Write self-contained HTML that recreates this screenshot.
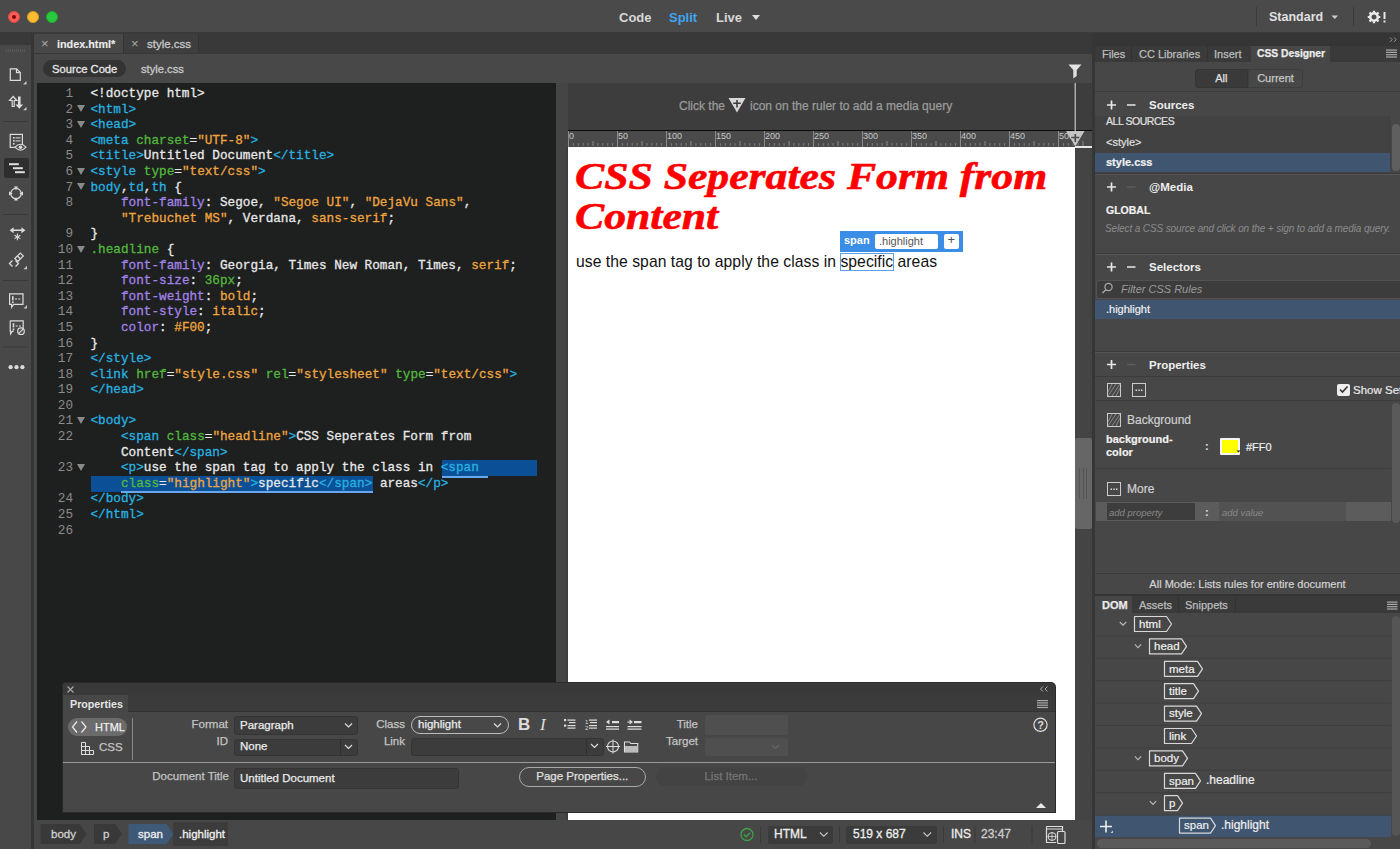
<!DOCTYPE html>
<html><head><meta charset="utf-8">
<style>
*{box-sizing:border-box;margin:0;padding:0}
html,body{width:1400px;height:849px;overflow:hidden;background:#474747;font-family:"Liberation Sans",sans-serif;color:#ddd}
.a{position:absolute}
#titlebar{left:0;top:0;width:1400px;height:33px;background:#4a4a4a;border-bottom:1px solid #3a3a3a}
.tl{width:12px;height:12px;border-radius:50%;top:11px}
.vm{top:11px;font-size:13px;font-weight:bold;color:#d8d8d8;line-height:14px}
#lefttb{left:0;top:33px;width:31px;height:816px;background:#484848}
#lefttop{left:0;top:33px;width:31px;height:12px;background:#393939}
#ldiv{left:31px;top:33px;width:3px;height:816px;background:#363636}
#doctabs{left:34px;top:33px;width:1058px;height:21px;background:#393939}
#subbar{left:34px;top:54px;width:1058px;height:29px;background:#484848}
#codebg{left:37px;top:83px;width:519px;height:737px;background:#1e1f1f}
#codeleft{left:34px;top:83px;width:3px;height:737px;background:#474747}
#splitter{left:556px;top:83px;width:12px;height:737px;background:#454545}
#mqbar{left:568px;top:83px;width:524px;height:47px;background:#3d3d3d}
#ruler{left:568px;top:130px;width:524px;height:17px;background:#4a4a4a;border-top:1px solid #0a0a0a}
#page{left:568px;top:147px;width:507px;height:673px;background:#fff}
#pvright{left:1075px;top:147px;width:17px;height:673px;background:#444}
#rdiv{left:1092px;top:33px;width:3px;height:816px;background:#363636}
#rpanel{left:1095px;top:33px;width:305px;height:816px;background:#474747}
#status{left:34px;top:820px;width:1058px;height:29px;background:#474747}
pre.code{font-family:"Liberation Mono",monospace;font-size:12.7px;line-height:15.6px;color:#e4e4e4;white-space:pre;-webkit-text-stroke:0.3px currentColor}
.t{color:#27b2e0}.g{color:#52b83c}.o{color:#eea540}.p{color:#a283e6}.w{color:#e8e8e8}
.ln{font-family:"Liberation Mono",monospace;font-size:12.7px;line-height:15.6px;color:#8b8b8b;text-align:right;width:40px}
.fold{width:0;height:0;border-left:4px solid transparent;border-right:4px solid transparent;border-top:7px solid #8a8a8a}
.xx{font-size:13px;line-height:13px;color:#aaa}
.tabt{font-size:11.5px;line-height:12px;color:#c8c8c8;white-space:nowrap;-webkit-text-stroke:0.3px currentColor}
.mq{font-size:12px;line-height:13px;color:#9b9b9b;white-space:nowrap;-webkit-text-stroke:0.25px currentColor}
.hl{font-family:"Liberation Serif",serif;font-weight:bold;font-style:italic;font-size:37.8px;line-height:40.2px;color:#f00;white-space:nowrap;transform:scaleX(1.156);transform-origin:0 0;-webkit-text-stroke:0.6px #f00}
.bt{font-size:15.7px;line-height:18px;color:#111;white-space:nowrap;letter-spacing:0.05px}
.pl{font-size:11.5px;line-height:13px;color:#c4c4c4;white-space:nowrap;-webkit-text-stroke:0.25px currentColor}
.pv{font-size:11.5px;line-height:13px;color:#ececec;white-space:nowrap;-webkit-text-stroke:0.25px currentColor}
.box{background:#3c3c3c;border:1px solid #353535;border-radius:3px}
.sb{font-size:11.5px;line-height:13px;color:#d0d0d0;white-space:nowrap;-webkit-text-stroke:0.3px currentColor}
.rt{font-size:11px;line-height:12px;color:#bdbdbd;white-space:nowrap;-webkit-text-stroke:0.25px currentColor}
.hd{font-size:11.5px;line-height:13px;color:#eee;font-weight:bold;white-space:nowrap}
.rl{font-size:11px;line-height:13px;color:#e0e0e0;white-space:nowrap;-webkit-text-stroke:0.2px currentColor}
.dt{font-size:11.5px;line-height:13px;color:#f0f0f0;white-space:nowrap;-webkit-text-stroke:0.2px currentColor}
</style></head><body>
<div id="titlebar" class="a"></div>
<div class="a tl" style="left:8px;background:#fc5d57;border:1px solid #de4a43"></div><div class="a" style="left:12px;top:15px;width:4px;height:4px;border-radius:50%;background:#7e0508"></div>
<div class="a tl" style="left:27px;background:#fdbb2e;border:1px solid #dd9f22"></div>
<div class="a tl" style="left:46px;background:#28c93f;border:1px solid #1dad2c"></div>
<div class="a vm" style="left:619px">Code</div>
<div class="a vm" style="left:669px;color:#3ea6f3">Split</div>
<div class="a vm" style="left:716px">Live</div>
<div class="a" style="left:752px;top:15px;width:0;height:0;border-left:4.5px solid transparent;border-right:4.5px solid transparent;border-top:5px solid #e0e0e0"></div>

<div id="lefttb" class="a"></div>
<div id="lefttop" class="a"></div>
<div id="ldiv" class="a"></div>
<svg class="a" style="left:0;top:0" width="32" height="849" viewBox="0 0 32 849">
<g fill="none" stroke="#dcdcdc" stroke-width="1.2">
<path d="M10.3 68.8h6.2l3.8 3.8v7.7h-10z"/><path d="M16.5 68.8v3.8h3.8"/>
<path d="M12.2 106.5v-6h-2.6l3.6-4 3.6 4h-2.6v6z"/>
<rect x="10.2" y="134.4" width="12.2" height="13" />
<circle cx="16" cy="193.6" r="5.2"/>
<path d="M9.6 293.8h13.4v10.6h-9.2l-2.2 2.8v-2.8h-2z"/>
<path d="M10.2 320.8h13v7.5M13.8 331.2h-1.4l-1.8 2.6v-2.6h-0.4v-10.4"/>
<circle cx="21" cy="331.2" r="3.3"/><path d="M18.8 333.4l4.4-4.4"/>
<path d="M12.5 260.5l-3 3 3 3M15.5 260.5l3 3-3 3" stroke-width="1.3"/>
<path d="M14.8 258.5l5.5-5.5 3 3-5.5 5.5-3-3z M17.5 256l3 3"/>
</g>
<g fill="#dcdcdc">
<path d="M18 96.5v8h-2.6l3.9 4.2 3.9-4.2h-2.6v-8z"/>
<path d="M26.5 81v3.5h-3.5z M26.5 106.8v3.5h-3.5z M27 265.8v3.5h-3.5z M27 305v3.5h-3.5z" fill="#c8c8c8"/>
<rect x="13" y="137" width="1.6" height="1.6"/><rect x="15.5" y="137.4" width="5" height="1"/>
<rect x="13" y="140" width="1.6" height="1.6"/><rect x="15.5" y="140.4" width="5" height="1"/>
<rect x="13" y="143" width="1.6" height="1.6"/>
<path d="M15 147.2q5.5-6 11 0q-5.5 6-11 0z" fill="#484848" stroke="#dcdcdc" stroke-width="1.1"/>
<circle cx="20.5" cy="147.2" r="1.8"/>
<path d="M16 190.2l-2-3.6h4z M16 197l-2 3.6h4z M12.6 193.6l-3.6-2v4z M19.4 193.6l3.6-2v4z"/>
<path d="M9.6 230.3l4-3v2.2h7.8v-2.2l4 3-4 3v-2.2h-7.8v2.2z"/>
<rect x="12" y="296.2" width="1.6" height="4.2"/><rect x="12" y="301.5" width="1.6" height="1.6"/><rect x="15" y="298.5" width="2" height="1"/><rect x="18.2" y="298.5" width="2" height="1"/>
<rect x="12.7" y="323.2" width="1.6" height="4.2"/><rect x="12.7" y="328.5" width="1.6" height="1.6"/><rect x="15.7" y="325.5" width="2" height="1"/><rect x="18.9" y="325.5" width="2" height="1"/>
<circle cx="10.6" cy="367.2" r="2.1"/><circle cx="16.5" cy="367.2" r="2.1"/><circle cx="22.4" cy="367.2" r="2.1"/>
</g>
<g stroke="#dcdcdc" stroke-width="1.1"><path d="M17.4 233.6v6.6M14.5 235.2l5.8 3.4M14.5 238.6l5.8-3.4"/></g>
<g fill="#3a3a3a"><rect x="3" y="121" width="25" height="1"/><rect x="3" y="214" width="25" height="1"/><rect x="3" y="280" width="25" height="1"/><rect x="3" y="346.5" width="25" height="1"/></g>
<rect x="4" y="158" width="25" height="20" rx="2.5" fill="#2e2e2e"/>
<g fill="#e0e0e0"><rect x="9" y="163.2" width="9.8" height="2"/><rect x="13" y="167.2" width="9.8" height="2"/><rect x="15" y="171.2" width="9.8" height="2"/></g>
<g fill="#565656"><rect x="6" y="49" width="1" height="3"/><rect x="8" y="49" width="1" height="3"/><rect x="10" y="49" width="1" height="3"/><rect x="12" y="49" width="1" height="3"/><rect x="14" y="49" width="1" height="3"/><rect x="16" y="49" width="1" height="3"/><rect x="18" y="49" width="1" height="3"/><rect x="20" y="49" width="1" height="3"/><rect x="22" y="49" width="1" height="3"/><rect x="24" y="49" width="1" height="3"/></g>
</svg>

<div id="doctabs" class="a"></div>
<div id="subbar" class="a"></div>
<div class="a" style="left:34px;top:34px;width:89px;height:19px;background:#484848"></div>
<div class="a" style="left:123px;top:34px;width:76px;height:19px;background:#3e3e3e;border-left:1px solid #333;border-right:1px solid #333"></div>
<div class="a xx" style="left:41px;top:37px">&#215;</div>
<div class="a tabt" style="left:57px;top:38px;color:#ececec;font-weight:bold;font-size:10.8px;-webkit-text-stroke:0.1px currentColor">index.html*</div>
<div class="a xx" style="left:131px;top:37px">&#215;</div>
<div class="a tabt" style="left:147px;top:38px">style.css</div>
<div class="a" style="left:43px;top:60px;width:83px;height:17px;border-radius:9px;background:#333"></div>
<div class="a tabt" style="left:52px;top:63px;color:#e8e8e8;font-size:11.2px">Source Code</div>
<div class="a tabt" style="left:141px;top:63px;font-size:11.2px">style.css</div>
<div id="codeleft" class="a"></div>
<div id="codebg" class="a"></div>
<div class="a" style="left:442px;top:460px;width:94.5px;height:16px;background:#0b5096"></div>
<div class="a" style="left:91px;top:476px;width:282px;height:15.5px;background:#0b5096"></div>
<div class="a" style="left:442px;top:476px;width:46px;height:2px;background:#6aa8ee"></div>
<div class="a" style="left:121px;top:491px;width:252px;height:2px;background:#6aa8ee"></div>
<pre class="a code" style="left:90.5px;top:86px"><span class="w">&lt;!doctype html&gt;</span>
<span class="t">&lt;html&gt;</span>
<span class="t">&lt;head&gt;</span>
<span class="t">&lt;meta</span><span class="w"> </span><span class="g">charset</span><span class="w">=</span><span class="o">&quot;UTF-8&quot;</span><span class="t">&gt;</span>
<span class="t">&lt;title&gt;</span><span class="w">Untitled Document</span><span class="t">&lt;/title&gt;</span>
<span class="t">&lt;style</span><span class="w"> </span><span class="g">type</span><span class="w">=</span><span class="o">&quot;text/css&quot;</span><span class="t">&gt;</span>
<span class="t">body</span><span class="w">,</span><span class="t">td</span><span class="w">,</span><span class="t">th</span><span class="w"> {</span>
<span class="w">    </span><span class="p">font-family</span><span class="w">: Segoe, </span><span class="o">&quot;Segoe UI&quot;</span><span class="w">, </span><span class="o">&quot;DejaVu Sans&quot;</span><span class="w">,</span>
<span class="w">    </span><span class="o">&quot;Trebuchet MS&quot;</span><span class="w">, Verdana, </span><span class="o">sans-serif</span><span class="w">;</span>
<span class="w">}</span>
<span class="g">.headline</span><span class="w"> {</span>
<span class="w">    </span><span class="p">font-family</span><span class="w">: Georgia, Times New Roman, Times, </span><span class="o">serif</span><span class="w">;</span>
<span class="w">    </span><span class="p">font-size</span><span class="w">: </span><span class="g">36px</span><span class="w">;</span>
<span class="w">    </span><span class="p">font-weight</span><span class="w">: </span><span class="o">bold</span><span class="w">;</span>
<span class="w">    </span><span class="p">font-style</span><span class="w">: </span><span class="o">italic</span><span class="w">;</span>
<span class="w">    </span><span class="p">color</span><span class="w">: </span><span class="o">#F00</span><span class="w">;</span>
<span class="w">}</span>
<span class="t">&lt;/style&gt;</span>
<span class="t">&lt;link</span><span class="w"> </span><span class="g">href</span><span class="w">=</span><span class="o">&quot;style.css&quot;</span><span class="w"> </span><span class="g">rel</span><span class="w">=</span><span class="o">&quot;stylesheet&quot;</span><span class="w"> </span><span class="g">type</span><span class="w">=</span><span class="o">&quot;text/css&quot;</span><span class="t">&gt;</span>
<span class="t">&lt;/head&gt;</span>

<span class="t">&lt;body&gt;</span>
<span class="w">    </span><span class="t">&lt;span</span><span class="w"> </span><span class="g">class</span><span class="w">=</span><span class="o">&quot;headline&quot;</span><span class="t">&gt;</span><span class="w">CSS Seperates Form from</span>
<span class="w">    Content</span><span class="t">&lt;/span&gt;</span>
<span class="w">    </span><span class="t">&lt;p&gt;</span><span class="w">use the span tag to apply the class in </span><span class="t">&lt;span</span>
<span class="w">    </span><span class="g">class</span><span class="w">=</span><span class="o">&quot;highlight&quot;</span><span class="t">&gt;</span><span class="w">specific</span><span class="t">&lt;/span&gt;</span><span class="w"> areas</span><span class="t">&lt;/p&gt;</span>
<span class="t">&lt;/body&gt;</span>
<span class="t">&lt;/html&gt;</span>
</pre>
<pre class="a ln" style="left:33px;top:86px">1
2
3
4
5
6
7
8

9
10
11
12
13
14
15
16
17
18
19
20
21
22

23

24
25
26</pre>
<div class="a fold" style="left:77px;top:105.1px"></div>
<div class="a fold" style="left:77px;top:120.7px"></div>
<div class="a fold" style="left:77px;top:167.5px"></div>
<div class="a fold" style="left:77px;top:183.1px"></div>
<div class="a fold" style="left:77px;top:245.5px"></div>
<div class="a fold" style="left:77px;top:417.1px"></div>
<div class="a fold" style="left:77px;top:463.9px"></div>
<div id="splitter" class="a"></div><div class="a" style="left:566px;top:147px;width:2px;height:673px;background:#3e3e3e"></div>
<!--PROPS-->
<div id="mqbar" class="a"></div>
<div id="ruler" class="a"></div>
<div id="page" class="a"></div>
<div id="pvright" class="a"></div>
<div id="rdiv" class="a"></div>
<div id="rpanel" class="a"></div>
<div id="status" class="a"></div>
<div class="a mq" style="left:679px;top:100px">Click the</div>
<div class="a mq" style="left:750px;top:100px">icon on the ruler to add a media query</div>
<div class="a hl" style="left:575px;top:156px">CSS Seperates Form from<br>Content</div>
<div class="a bt" style="left:576px;top:253px">use the span tag to apply the class in specific areas</div>
<div class="a" style="left:840px;top:230.5px;width:123px;height:21.5px;background:#3a8ee6"></div>
<div class="a" style="left:844px;top:234px;font-size:11px;font-weight:bold;color:#fff;line-height:12px">span</div>
<div class="a" style="left:874.5px;top:233.5px;width:63.5px;height:15.5px;background:#fff;border-radius:2px"></div>
<div class="a" style="left:879px;top:235px;font-size:11px;color:#555;line-height:12px">.highlight</div>
<div class="a" style="left:944px;top:233.5px;width:15px;height:15.5px;background:#fff;border-radius:2px"></div>
<div class="a" style="left:947.5px;top:233px;font-size:13px;color:#555;line-height:14px">+</div>
<div class="a" style="left:840px;top:252.5px;width:53.5px;height:18px;border:1px solid #5aa0ea"></div>
<div class="a" style="left:1075px;top:438px;width:17px;height:91px;background:#666;border-radius:2px"></div>
<div class="a" style="left:1079px;top:468px;width:1px;height:31px;background:#555"></div>
<div class="a" style="left:1082.5px;top:468px;width:1px;height:31px;background:#555"></div>
<div class="a" style="left:1086px;top:468px;width:1px;height:31px;background:#555"></div>
<svg class="a" style="left:0;top:0;pointer-events:none" width="1400" height="849" viewBox="0 0 1400 849"><rect x="568.00" y="131" width="1" height="16" fill="#8a8a8a"/><rect x="572.90" y="143" width="1" height="3" fill="#7a7a7a"/><rect x="577.80" y="143" width="1" height="3" fill="#7a7a7a"/><rect x="582.70" y="143" width="1" height="3" fill="#7a7a7a"/><rect x="587.60" y="143" width="1" height="3" fill="#7a7a7a"/><rect x="592.50" y="141" width="1" height="5" fill="#8a8a8a"/><rect x="597.40" y="143" width="1" height="3" fill="#7a7a7a"/><rect x="602.30" y="143" width="1" height="3" fill="#7a7a7a"/><rect x="607.20" y="143" width="1" height="3" fill="#7a7a7a"/><rect x="612.10" y="143" width="1" height="3" fill="#7a7a7a"/><rect x="617.00" y="131" width="1" height="16" fill="#8a8a8a"/><rect x="621.90" y="143" width="1" height="3" fill="#7a7a7a"/><rect x="626.80" y="143" width="1" height="3" fill="#7a7a7a"/><rect x="631.70" y="143" width="1" height="3" fill="#7a7a7a"/><rect x="636.60" y="143" width="1" height="3" fill="#7a7a7a"/><rect x="641.50" y="141" width="1" height="5" fill="#8a8a8a"/><rect x="646.40" y="143" width="1" height="3" fill="#7a7a7a"/><rect x="651.30" y="143" width="1" height="3" fill="#7a7a7a"/><rect x="656.20" y="143" width="1" height="3" fill="#7a7a7a"/><rect x="661.10" y="143" width="1" height="3" fill="#7a7a7a"/><rect x="666.00" y="131" width="1" height="16" fill="#8a8a8a"/><rect x="670.90" y="143" width="1" height="3" fill="#7a7a7a"/><rect x="675.80" y="143" width="1" height="3" fill="#7a7a7a"/><rect x="680.70" y="143" width="1" height="3" fill="#7a7a7a"/><rect x="685.60" y="143" width="1" height="3" fill="#7a7a7a"/><rect x="690.50" y="141" width="1" height="5" fill="#8a8a8a"/><rect x="695.40" y="143" width="1" height="3" fill="#7a7a7a"/><rect x="700.30" y="143" width="1" height="3" fill="#7a7a7a"/><rect x="705.20" y="143" width="1" height="3" fill="#7a7a7a"/><rect x="710.10" y="143" width="1" height="3" fill="#7a7a7a"/><rect x="715.00" y="131" width="1" height="16" fill="#8a8a8a"/><rect x="719.90" y="143" width="1" height="3" fill="#7a7a7a"/><rect x="724.80" y="143" width="1" height="3" fill="#7a7a7a"/><rect x="729.70" y="143" width="1" height="3" fill="#7a7a7a"/><rect x="734.60" y="143" width="1" height="3" fill="#7a7a7a"/><rect x="739.50" y="141" width="1" height="5" fill="#8a8a8a"/><rect x="744.40" y="143" width="1" height="3" fill="#7a7a7a"/><rect x="749.30" y="143" width="1" height="3" fill="#7a7a7a"/><rect x="754.20" y="143" width="1" height="3" fill="#7a7a7a"/><rect x="759.10" y="143" width="1" height="3" fill="#7a7a7a"/><rect x="764.00" y="131" width="1" height="16" fill="#8a8a8a"/><rect x="768.90" y="143" width="1" height="3" fill="#7a7a7a"/><rect x="773.80" y="143" width="1" height="3" fill="#7a7a7a"/><rect x="778.70" y="143" width="1" height="3" fill="#7a7a7a"/><rect x="783.60" y="143" width="1" height="3" fill="#7a7a7a"/><rect x="788.50" y="141" width="1" height="5" fill="#8a8a8a"/><rect x="793.40" y="143" width="1" height="3" fill="#7a7a7a"/><rect x="798.30" y="143" width="1" height="3" fill="#7a7a7a"/><rect x="803.20" y="143" width="1" height="3" fill="#7a7a7a"/><rect x="808.10" y="143" width="1" height="3" fill="#7a7a7a"/><rect x="813.00" y="131" width="1" height="16" fill="#8a8a8a"/><rect x="817.90" y="143" width="1" height="3" fill="#7a7a7a"/><rect x="822.80" y="143" width="1" height="3" fill="#7a7a7a"/><rect x="827.70" y="143" width="1" height="3" fill="#7a7a7a"/><rect x="832.60" y="143" width="1" height="3" fill="#7a7a7a"/><rect x="837.50" y="141" width="1" height="5" fill="#8a8a8a"/><rect x="842.40" y="143" width="1" height="3" fill="#7a7a7a"/><rect x="847.30" y="143" width="1" height="3" fill="#7a7a7a"/><rect x="852.20" y="143" width="1" height="3" fill="#7a7a7a"/><rect x="857.10" y="143" width="1" height="3" fill="#7a7a7a"/><rect x="862.00" y="131" width="1" height="16" fill="#8a8a8a"/><rect x="866.90" y="143" width="1" height="3" fill="#7a7a7a"/><rect x="871.80" y="143" width="1" height="3" fill="#7a7a7a"/><rect x="876.70" y="143" width="1" height="3" fill="#7a7a7a"/><rect x="881.60" y="143" width="1" height="3" fill="#7a7a7a"/><rect x="886.50" y="141" width="1" height="5" fill="#8a8a8a"/><rect x="891.40" y="143" width="1" height="3" fill="#7a7a7a"/><rect x="896.30" y="143" width="1" height="3" fill="#7a7a7a"/><rect x="901.20" y="143" width="1" height="3" fill="#7a7a7a"/><rect x="906.10" y="143" width="1" height="3" fill="#7a7a7a"/><rect x="911.00" y="131" width="1" height="16" fill="#8a8a8a"/><rect x="915.90" y="143" width="1" height="3" fill="#7a7a7a"/><rect x="920.80" y="143" width="1" height="3" fill="#7a7a7a"/><rect x="925.70" y="143" width="1" height="3" fill="#7a7a7a"/><rect x="930.60" y="143" width="1" height="3" fill="#7a7a7a"/><rect x="935.50" y="141" width="1" height="5" fill="#8a8a8a"/><rect x="940.40" y="143" width="1" height="3" fill="#7a7a7a"/><rect x="945.30" y="143" width="1" height="3" fill="#7a7a7a"/><rect x="950.20" y="143" width="1" height="3" fill="#7a7a7a"/><rect x="955.10" y="143" width="1" height="3" fill="#7a7a7a"/><rect x="960.00" y="131" width="1" height="16" fill="#8a8a8a"/><rect x="964.90" y="143" width="1" height="3" fill="#7a7a7a"/><rect x="969.80" y="143" width="1" height="3" fill="#7a7a7a"/><rect x="974.70" y="143" width="1" height="3" fill="#7a7a7a"/><rect x="979.60" y="143" width="1" height="3" fill="#7a7a7a"/><rect x="984.50" y="141" width="1" height="5" fill="#8a8a8a"/><rect x="989.40" y="143" width="1" height="3" fill="#7a7a7a"/><rect x="994.30" y="143" width="1" height="3" fill="#7a7a7a"/><rect x="999.20" y="143" width="1" height="3" fill="#7a7a7a"/><rect x="1004.10" y="143" width="1" height="3" fill="#7a7a7a"/><rect x="1009.00" y="131" width="1" height="16" fill="#8a8a8a"/><rect x="1013.90" y="143" width="1" height="3" fill="#7a7a7a"/><rect x="1018.80" y="143" width="1" height="3" fill="#7a7a7a"/><rect x="1023.70" y="143" width="1" height="3" fill="#7a7a7a"/><rect x="1028.60" y="143" width="1" height="3" fill="#7a7a7a"/><rect x="1033.50" y="141" width="1" height="5" fill="#8a8a8a"/><rect x="1038.40" y="143" width="1" height="3" fill="#7a7a7a"/><rect x="1043.30" y="143" width="1" height="3" fill="#7a7a7a"/><rect x="1048.20" y="143" width="1" height="3" fill="#7a7a7a"/><rect x="1053.10" y="143" width="1" height="3" fill="#7a7a7a"/><rect x="1058.00" y="131" width="1" height="16" fill="#8a8a8a"/><rect x="1062.90" y="143" width="1" height="3" fill="#7a7a7a"/><rect x="1067.80" y="143" width="1" height="3" fill="#7a7a7a"/><rect x="1072.70" y="143" width="1" height="3" fill="#7a7a7a"/><rect x="1077.60" y="143" width="1" height="3" fill="#7a7a7a"/><rect x="1082.50" y="141" width="1" height="5" fill="#8a8a8a"/><g font-family="Liberation Sans" font-size="9" fill="#c8c8c8"><text x="569.00" y="138.6">0</text><text x="618.00" y="138.6">50</text><text x="667.00" y="138.6">100</text><text x="716.00" y="138.6">150</text><text x="765.00" y="138.6">200</text><text x="814.00" y="138.6">250</text><text x="863.00" y="138.6">300</text><text x="912.00" y="138.6">350</text><text x="961.00" y="138.6">400</text><text x="1010.00" y="138.6">450</text><text x="1059.00" y="138.6">500</text></g><rect x="1075" y="146" width="17" height="2" fill="#e8e8e8"/><rect x="1074.6" y="83" width="1.2" height="62" fill="#c8c8c8"/><path d="M1066 131h18.6l-9.3 15.5z" fill="#c4c4c4"/><path d="M1075.3 134v8M1071.3 137.5h8" stroke="#4a4a4a" stroke-width="1.6"/><path d="M1068.5 64.5h13l-4.8 5.6v5.8l-3.4 2.5v-8.3z" fill="#e2e2e2"/><path d="M728.5 98h17l-8.5 14.5z" fill="#d8d8d8"/><path d="M737 100v7.5M733.2 103.3h7.6" stroke="#3d3d3d" stroke-width="1.6"/></svg>
<div class="a" style="left:63px;top:683px;width:992px;height:129px;background:#474747;border-radius:3px 4px 0 0;box-shadow:0 0 0 1px #2a2a2a"></div>
<div class="a" style="left:63px;top:683px;width:992px;height:12px;background:#393939;border-radius:3px 4px 0 0"></div>
<div class="a" style="left:63px;top:695px;width:992px;height:17px;background:#3b3b3b;border-bottom:1px solid #333"></div>
<div class="a" style="left:63px;top:695px;width:65px;height:17px;background:#474747"></div>
<svg class="a" style="left:66px;top:685px" width="9" height="9"><path d="M1.5 1.5l6 6M7.5 1.5l-6 6" stroke="#aaa" stroke-width="1.1"/></svg>
<div class="a" style="left:70px;top:698px;font-size:10.7px;line-height:12px;font-weight:bold;color:#e4e4e4">Properties</div>
<svg class="a" style="left:1040px;top:686px" width="10" height="6"><path d="M3 0.5l-2.5 2.5 2.5 2.5M7.5 0.5l-2.5 2.5 2.5 2.5" fill="none" stroke="#aaa" stroke-width="1"/></svg>
<div class="a" style="left:68px;top:718px;width:58.5px;height:18px;border-radius:9px;background:#6b6b6b"></div>

<div class="a" style="left:132px;top:718px;width:1px;height:42px;background:#888"></div>
<div class="a pl" style="left:95px;top:721px;color:#f0f0f0;font-size:11px">HTML</div>
<div class="a pl" style="left:99px;top:741px">CSS</div>
<div class="a pl" style="left:170px;top:718px;width:58px;text-align:right">Format</div>
<div class="a pl" style="left:170px;top:735px;width:58px;text-align:right">ID</div>
<div class="a pl" style="left:330px;top:718px;width:75px;text-align:right">Class</div>
<div class="a pl" style="left:330px;top:735px;width:75px;text-align:right">Link</div>
<div class="a pl" style="left:620px;top:718px;width:78px;text-align:right">Title</div>
<div class="a pl" style="left:620px;top:735px;width:78px;text-align:right">Target</div>
<div class="a pl" style="left:100px;top:770px;width:129px;text-align:right">Document Title</div>
<div class="a box" style="left:234px;top:716px;width:124px;height:19px"></div>
<div class="a box" style="left:234px;top:738.5px;width:124px;height:17px"></div>
<div class="a" style="left:340px;top:739px;width:1px;height:16px;background:#2f2f2f"></div>
<div class="a pv" style="left:240px;top:719px">Paragraph</div>
<div class="a pv" style="left:240px;top:740px">None</div>
<div class="a" style="left:411px;top:715.5px;width:98px;height:18.5px;border:1.3px solid #bbb;border-radius:10px;background:#484848"></div>
<div class="a pv" style="left:418px;top:718px">highlight</div>
<div class="a" style="left:518px;top:716px;font-size:17px;line-height:18px;font-weight:bold;color:#ddd">B</div>
<div class="a" style="left:540px;top:716px;font-size:17px;line-height:18px;font-style:italic;font-family:'Liberation Serif',serif;color:#ddd">I</div>
<div class="a box" style="left:411px;top:738px;width:193px;height:17.5px"></div>
<div class="a" style="left:586px;top:739px;width:1px;height:16px;background:#2f2f2f"></div>
<div class="a" style="left:704.5px;top:715px;width:83.5px;height:20px;background:#4f4f4f;border-radius:2px"></div>
<div class="a" style="left:704.5px;top:738px;width:83.5px;height:17.5px;background:#4f4f4f;border-radius:2px"></div>
<div class="a" style="left:63px;top:762px;width:992px;height:1px;background:#9a9a9a"></div>
<div class="a box" style="left:234px;top:767.5px;width:224.5px;height:21px"></div>
<div class="a pv" style="left:240px;top:771.5px">Untitled Document</div>
<div class="a" style="left:518.5px;top:767px;width:127.5px;height:19.5px;border:1.3px solid #aaa;border-radius:10px"></div>
<div class="a pv" style="left:518.5px;top:770px;width:127.5px;text-align:center;color:#e0e0e0">Page Properties...</div>
<div class="a" style="left:655.5px;top:766.5px;width:151px;height:19.5px;background:#434343;border-radius:10px"></div>
<div class="a pv" style="left:655.5px;top:770px;width:151px;text-align:center;color:#767676">List Item...</div>
<svg class="a" style="left:0;top:0" width="1100" height="849" viewBox="0 0 1100 849">
<path d="M77 721.5l-4.5 5.5 4.5 5.5M81.5 721.5l4.5 5.5-4.5 5.5" fill="none" stroke="#eee" stroke-width="1.2"/>
<path d="M81.5 742.5h4v12h-4zM81.5 746.5h8v8h-8zM81.5 750.5h12v4h-12zM85.5 750.5v4M89.5 750.5v4" fill="none" stroke="#ddd" stroke-width="1"/>
<path d="M1036 808h10l-5-5z" fill="#e8e8e8"/>
<circle cx="1040.5" cy="724.8" r="6.6" fill="none" stroke="#ddd" stroke-width="1.2"/>
<g fill="#aaa"><rect x="1037" y="700" width="11" height="1.2"/><rect x="1037" y="702.3" width="11" height="1.2"/><rect x="1037" y="704.6" width="11" height="1.2"/><rect x="1037" y="706.9" width="11" height="1.2"/></g>
<g fill="#ddd">
<rect x="564" y="719" width="2.2" height="2.2"/><rect x="567.5" y="719.5" width="8" height="1.2"/><rect x="569" y="722" width="6.5" height="1.2"/><rect x="564" y="724.5" width="2.2" height="2.2"/><rect x="567.5" y="725" width="8" height="1.2"/><rect x="567.5" y="727.5" width="8" height="1.2"/>
<rect x="589" y="719.5" width="8" height="1.2"/><rect x="590" y="722" width="7" height="1.2"/><rect x="589" y="725" width="8" height="1.2"/><rect x="589" y="727.5" width="8" height="1.2"/>
<rect x="606" y="726" width="13" height="1.2"/><rect x="606" y="728.5" width="13" height="1.2"/><rect x="612" y="721" width="7" height="2.2"/><path d="M606 722l3.5-2.5v5z"/>
<rect x="627.5" y="726" width="14" height="1.2"/><rect x="627.5" y="728.5" width="14" height="1.2"/><rect x="634" y="721" width="7.5" height="2.2"/><path d="M633 722l-3.5-2.5v5z"/><rect x="627.5" y="721.5" width="2" height="1.2"/>
</g>
<text x="585" y="724" font-family="Liberation Sans" font-size="6" fill="#ddd">1</text><text x="585" y="730" font-family="Liberation Sans" font-size="6" fill="#ddd">2</text>
<circle cx="613" cy="746.5" r="5.5" fill="none" stroke="#ddd" stroke-width="1.1"/><path d="M613 739.5v14M606 746.5h14" stroke="#ddd" stroke-width="1"/>
<path d="M624.5 742h5l1.2 1.5h7v8.5h-13.2z" fill="none" stroke="#ddd" stroke-width="1.1"/><rect x="625" y="746" width="12.5" height="6" fill="#bbb"/>
<path d="M345 723.5l3.5 3.5 3.5-3.5M494 723.5l3.5 3.5 3.5-3.5M345 745l3.5 3.5 3.5-3.5M591 744l3.5 3.5 3.5-3.5" fill="none" stroke="#ddd" stroke-width="1.2"/><path d="M772 745l3.5 3.5 3.5-3.5" fill="none" stroke="#666" stroke-width="1.2"/><text x="1040.5" y="729" text-anchor="middle" font-family="Liberation Sans" font-size="11" font-weight="bold" fill="#ddd">?</text>
</svg>
<div class="a" style="left:173px;top:822px;width:55px;height:24px;background:#3c3c3c"></div>
<svg class="a" style="left:0;top:0" width="1100" height="849" viewBox="0 0 1100 849">
<path d="M40.7 824h39l7 10-7 10h-39z" fill="#393939"/>
<path d="M94 824h21l7 10-7 10h-21z" fill="#393939"/>
<path d="M128.5 824h38l7 10-7 10h-38z" fill="#3f5a78"/>
<circle cx="747" cy="834.5" r="6" fill="none" stroke="#3ea14a" stroke-width="1.3"/><path d="M743.8 834.5l2.3 2.3 4-4" fill="none" stroke="#3ea14a" stroke-width="1.3"/>
<path d="M1046.5 826.5h16v4.5M1046.5 826.5v16h9.5" fill="none" stroke="#ddd" stroke-width="1.2"/><rect x="1046.5" y="828.5" width="16" height="1" fill="#ddd"/>
<circle cx="1052" cy="836.5" r="4" fill="none" stroke="#ddd" stroke-width="1"/><path d="M1048 836.5h8M1052 832.5v8" stroke="#ddd" stroke-width="0.8"/>
<rect x="1057.5" y="831.5" width="7.5" height="12" rx="1" fill="#474747" stroke="#ddd" stroke-width="1.2"/>

<g fill="#3a3a3a"><rect x="760" y="826" width="1" height="17"/><rect x="839" y="826" width="1" height="17"/><rect x="943" y="826" width="1" height="17"/><rect x="974.5" y="826" width="1" height="17"/><rect x="1031.5" y="826" width="1" height="17"/></g>
</svg>
<div class="a sb" style="left:51px;top:828px">body</div>
<div class="a sb" style="left:103px;top:828px">p</div>
<div class="a sb" style="left:138px;top:828px;color:#f0f0f0">span</div>
<div class="a sb" style="left:179px;top:828px;color:#f0f0f0">.highlight</div>
<div class="a" style="left:767.5px;top:825.5px;width:65px;height:18px;background:#3b3b3b;border-radius:2px"></div>
<div class="a" style="left:846px;top:825.5px;width:90.5px;height:18px;background:#3b3b3b;border-radius:2px"></div>
<div class="a sb" style="left:774px;top:828px;color:#eee;font-size:12px">HTML</div>
<div class="a sb" style="left:853px;top:828px;color:#eee;font-size:12px">519 x 687</div>
<div class="a sb" style="left:951px;top:828px;color:#eee;font-size:12px">INS</div>
<div class="a sb" style="left:981px;top:828px;color:#ccc;font-size:12px">23:47</div>
<svg class="a" style="left:0;top:0" width="1100" height="849" viewBox="0 0 1100 849"><path d="M820 832.5l3.8 3.8 3.8-3.8M923.5 832.5l3.8 3.8 3.8-3.8" fill="none" stroke="#ccc" stroke-width="1.1"/></svg>
<div class="a" style="left:1095px;top:33px;width:305px;height:13px;background:#353535"></div>
<svg class="a" style="left:1389px;top:37px" width="10" height="6"><path d="M1 0.5l2.2 2.2-2.2 2.2M5 0.5l2.2 2.2-2.2 2.2" fill="none" stroke="#999" stroke-width="1"/></svg>
<div class="a" style="left:1095px;top:46px;width:305px;height:16px;background:#3a3a3a"></div>
<div class="a" style="left:1131px;top:46px;width:1px;height:16px;background:#333"></div>
<div class="a" style="left:1206.5px;top:46px;width:1px;height:16px;background:#333"></div>
<div class="a" style="left:1251px;top:46px;width:79px;height:16px;background:#474747"></div>
<div class="a rt" style="left:1102px;top:48px">Files</div>
<div class="a rt" style="left:1139px;top:48px">CC Libraries</div>
<div class="a rt" style="left:1214px;top:48px">Insert</div>
<div class="a rt" style="left:1257px;top:48px;color:#ececec;font-weight:bold;font-size:10.3px">CSS Designer</div>
<g></g>
<div class="a" style="left:1194.5px;top:69px;width:53.5px;height:19px;background:#3a3a3a;border:1px solid #353535;border-radius:3px 0 0 3px"></div>
<div class="a" style="left:1248px;top:69px;width:55px;height:19px;background:#474747;border:1px solid #3e3e3e;border-radius:0 3px 3px 0"></div>
<div class="a rt" style="left:1194.5px;top:72px;width:53.5px;text-align:center;color:#e0e0e0">All</div>
<div class="a rt" style="left:1248px;top:72px;width:55px;text-align:center;color:#c8c8c8">Current</div>
<div class="a" style="left:1095px;top:91px;width:305px;height:1px;background:#3c3c3c"></div>
<div class="a" style="left:1095px;top:116px;width:296px;height:57px;background:#424242"></div>
<div class="a" style="left:1095px;top:152.5px;width:295px;height:19.5px;background:#3f5570"></div>
<div class="a" style="left:1391.5px;top:124px;width:8.5px;height:47px;background:#5f5f5f;border-radius:4px"></div>
<div class="a" style="left:1095px;top:173px;width:305px;height:2px;background:#555;border-top:1px solid #3c3c3c"></div>
<div class="a" style="left:1095px;top:252.5px;width:305px;height:2px;background:#555;border-top:1px solid #3c3c3c"></div>
<div class="a" style="left:1095px;top:350.5px;width:305px;height:2px;background:#555;border-top:1px solid #3c3c3c"></div>
<div class="a hd" style="left:1149px;top:99px">Sources</div>
<div class="a rl" style="left:1106px;top:115px;font-size:10.5px;letter-spacing:-0.45px">ALL SOURCES</div>
<div class="a rl" style="left:1106px;top:135.5px">&lt;style&gt;</div>
<div class="a rl" style="left:1106px;top:156px;font-weight:bold;color:#f0f0f0">style.css</div>
<div class="a hd" style="left:1149px;top:181px">@Media</div>
<div class="a rl" style="left:1106px;top:203.5px;font-weight:bold;color:#f0f0f0;font-size:10.5px">GLOBAL</div>
<div class="a" style="left:1105px;top:223px;font-size:10px;line-height:12px;font-style:italic;color:#8c8c8c;white-space:nowrap;letter-spacing:-0.12px">Select a CSS source and click on the + sign to add a media query.</div>
<div class="a hd" style="left:1149px;top:261px">Selectors</div>
<div class="a" style="left:1096px;top:280px;width:304px;height:18.5px;background:#3c3c3c;border:1px solid #525252;border-right:none;border-radius:3px 0 0 3px"></div>
<div class="a" style="left:1121px;top:283px;font-size:11px;line-height:13px;font-style:italic;color:#9a9a9a;white-space:nowrap">Filter CSS Rules</div>
<div class="a" style="left:1095px;top:299.5px;width:305px;height:19.5px;background:#3f5570"></div>
<div class="a rl" style="left:1106px;top:303px;color:#f0f0f0">.highlight</div>
<div class="a hd" style="left:1149px;top:358.5px">Properties</div>
<div class="a" style="left:1095px;top:376px;width:305px;height:1px;background:#3c3c3c"></div>
<div class="a" style="left:1095px;top:400px;width:305px;height:1px;background:#3e3e3e"></div>
<div class="a" style="left:1337px;top:383.5px;width:12.5px;height:12.5px;background:#eee;border-radius:2px"></div>
<div class="a rl" style="left:1353px;top:383.5px;font-size:11.5px;color:#e8e8e8">Show Set</div>
<div class="a" style="left:1391.5px;top:403px;width:8.5px;height:120px;background:#5a5a5a;border-radius:4px"></div>
<div class="a rl" style="left:1127px;top:413.5px;font-size:12px;color:#d0d0d0">Background</div>
<div class="a rl" style="left:1106px;top:433px;font-weight:bold;color:#f0f0f0;line-height:12.7px">background-<br>color</div>
<div class="a rl" style="left:1205px;top:440px;font-weight:bold;color:#ddd">:</div>
<div class="a" style="left:1219.5px;top:438px;width:20.5px;height:16.5px;background:#ff0;border:2px solid #f4f4f4;border-radius:1px"></div>
<div class="a rl" style="left:1246px;top:441px;color:#f0f0f0">#FF0</div>
<div class="a" style="left:1095px;top:468px;width:296px;height:1px;background:#3e3e3e"></div>
<div class="a rl" style="left:1127px;top:483px;font-size:12px;color:#d0d0d0">More</div>
<div class="a" style="left:1096px;top:501.5px;width:295px;height:19.5px;background:#5c5c5c"></div>
<div class="a" style="left:1107px;top:503px;width:88px;height:16.5px;background:#3d3d3d"></div>
<div class="a" style="left:1219px;top:502px;width:127px;height:18.5px;background:#525252"></div>
<div class="a rl" style="left:1205px;top:506px;font-weight:bold;color:#ddd">:</div>
<div class="a" style="left:1109px;top:507px;font-size:9.5px;line-height:12px;font-style:italic;color:#8a8a8a">add property</div>
<div class="a" style="left:1222px;top:507px;font-size:9.5px;line-height:12px;font-style:italic;color:#8a8a8a">add value</div>
<div class="a" style="left:1095px;top:573px;width:305px;height:1px;background:#3a3a3a"></div>
<div class="a" style="left:1095px;top:574px;width:305px;height:20px;background:#474747"></div>
<div class="a rl" style="left:1095px;top:577.5px;width:305px;text-align:center;font-size:11px;color:#d4d4d4">All Mode: Lists rules for entire document</div>
<div class="a" style="left:1095px;top:594px;width:305px;height:2px;background:#343434"></div>
<div class="a" style="left:1095px;top:596px;width:305px;height:17px;background:#3a3a3a"></div>
<div class="a" style="left:1095px;top:596px;width:37px;height:17px;background:#474747"></div>
<div class="a" style="left:1178px;top:596px;width:1px;height:17px;background:#333"></div>
<div class="a" style="left:1235px;top:596px;width:1px;height:17px;background:#333"></div>
<div class="a rt" style="left:1102px;top:598.5px;color:#ececec;font-weight:bold">DOM</div>
<div class="a rt" style="left:1139px;top:598.5px">Assets</div>
<div class="a rt" style="left:1185px;top:598.5px">Snippets</div>
<svg class="a" style="left:0;top:0" width="1400" height="849" viewBox="0 0 1400 849">
<g stroke="#e8e8e8" stroke-width="1.7"><path d="M1111.5 100.5v9M1107 105h9M1111.5 182.5v9M1107 187h9M1111.5 262.5v9M1107 267h9M1111.5 360v9M1107 364.5h9"/><path d="M1127 105h8.5M1127 267h8.5"/></g>
<g stroke="#5e5e5e" stroke-width="1.7"><path d="M1127 187h8.5M1127 364.5h8.5"/></g>
<circle cx="1108.5" cy="287" r="3.6" fill="none" stroke="#aaa" stroke-width="1.2"/><path d="M1106 289.5l-3.5 3.5" stroke="#aaa" stroke-width="1.5"/>
<rect x="1107.5" y="383.5" width="13" height="13" fill="none" stroke="#ccc" stroke-width="1"/><path d="M1108 392l4-8M1108 396l8-12M1112 396l8-12M1116 396l4-8" stroke="#888" stroke-width="1"/>
<rect x="1132.5" y="383.5" width="13" height="13" fill="none" stroke="#ccc" stroke-width="1"/><g fill="#ddd"><rect x="1135.5" y="389.5" width="1.5" height="1.5"/><rect x="1138.3" y="389.5" width="1.5" height="1.5"/><rect x="1141" y="389.5" width="1.5" height="1.5"/></g>
<rect x="1107.5" y="413.5" width="13" height="13" fill="none" stroke="#ccc" stroke-width="1"/><path d="M1108 422l4-8M1108 426l8-12M1112 426l8-12M1116 426l4-8" stroke="#888" stroke-width="1"/>
<rect x="1107.5" y="482.5" width="13" height="13" fill="none" stroke="#ccc" stroke-width="1"/><g fill="#ddd"><rect x="1110.5" y="488.5" width="1.5" height="1.5"/><rect x="1113.3" y="488.5" width="1.5" height="1.5"/><rect x="1116" y="488.5" width="1.5" height="1.5"/></g>
<path d="M1340 389.5l2.5 2.5 5-5.5" fill="none" stroke="#333" stroke-width="1.6"/>
<path d="M1236.5 450.5h4l-2 2z" fill="#222"/>
<g fill="#aaa"><rect x="1386" y="49.5" width="11" height="1.2"/><rect x="1386" y="51.8" width="11" height="1.2"/><rect x="1386" y="54.1" width="11" height="1.2"/><rect x="1386" y="56.4" width="11" height="1.2"/>
<rect x="1387" y="601.5" width="10.5" height="1.2"/><rect x="1387" y="603.8" width="10.5" height="1.2"/><rect x="1387" y="606.1" width="10.5" height="1.2"/><rect x="1387" y="608.4" width="10.5" height="1.2"/></g>
</svg>
<div class="a" style="left:1095px;top:815.3px;width:296px;height:21.5px;background:#3f5570"></div>
<div class="a dt" style="left:1139.0px;top:617.8px">html</div>
<div class="a dt" style="left:1154.0px;top:640.2px">head</div>
<div class="a dt" style="left:1169.0px;top:662.6px">meta</div>
<div class="a dt" style="left:1169.0px;top:685.0px">title</div>
<div class="a dt" style="left:1169.0px;top:707.4px">style</div>
<div class="a dt" style="left:1169.0px;top:729.8px">link</div>
<div class="a dt" style="left:1154.0px;top:752.2px">body</div>
<div class="a dt" style="left:1169.0px;top:774.6px">span</div>
<div class="a rl" style="left:1206.0px;top:774.3px;font-size:12px;color:#eee">.headline</div>
<div class="a dt" style="left:1169.0px;top:797.0px">p</div>
<div class="a dt" style="left:1184.0px;top:819.4px">span</div>
<div class="a rl" style="left:1221.0px;top:819.1px;font-size:12px;color:#eee">.highlight</div>
<svg class="a" style="left:0;top:0" width="1400" height="849" viewBox="0 0 1400 849">
<path d="M1119.8 622.0l3.2 3.2 3.2-3.2" fill="none" stroke="#bbb" stroke-width="1.1"/>
<path d="M1134.5 616.5h32.0l5 7.5-5 7.5h-32.0z" fill="none" stroke="#d8d8d8" stroke-width="1.2" stroke-linejoin="round"/>
<rect x="1095" y="635.4" width="296" height="1" fill="#3f3f3f"/>
<path d="M1134.8 644.4l3.2 3.2 3.2-3.2" fill="none" stroke="#bbb" stroke-width="1.1"/>
<path d="M1149.5 638.9h32.0l5 7.5-5 7.5h-32.0z" fill="none" stroke="#d8d8d8" stroke-width="1.2" stroke-linejoin="round"/>
<rect x="1095" y="657.8" width="296" height="1" fill="#3f3f3f"/>
<path d="M1164.5 661.3h33.0l5 7.5-5 7.5h-33.0z" fill="none" stroke="#d8d8d8" stroke-width="1.2" stroke-linejoin="round"/>
<rect x="1095" y="680.2" width="296" height="1" fill="#3f3f3f"/>
<path d="M1164.5 683.7h29.0l5 7.5-5 7.5h-29.0z" fill="none" stroke="#d8d8d8" stroke-width="1.2" stroke-linejoin="round"/>
<rect x="1095" y="702.6" width="296" height="1" fill="#3f3f3f"/>
<path d="M1164.5 706.1h32.0l5 7.5-5 7.5h-32.0z" fill="none" stroke="#d8d8d8" stroke-width="1.2" stroke-linejoin="round"/>
<rect x="1095" y="725.0" width="296" height="1" fill="#3f3f3f"/>
<path d="M1164.5 728.5h27.0l5 7.5-5 7.5h-27.0z" fill="none" stroke="#d8d8d8" stroke-width="1.2" stroke-linejoin="round"/>
<rect x="1095" y="747.4" width="296" height="1" fill="#3f3f3f"/>
<path d="M1134.8 756.4l3.2 3.2 3.2-3.2" fill="none" stroke="#bbb" stroke-width="1.1"/>
<path d="M1149.5 750.9h33.0l5 7.5-5 7.5h-33.0z" fill="none" stroke="#d8d8d8" stroke-width="1.2" stroke-linejoin="round"/>
<rect x="1095" y="769.8" width="296" height="1" fill="#3f3f3f"/>
<path d="M1164.5 773.3h31.0l5 7.5-5 7.5h-31.0z" fill="none" stroke="#d8d8d8" stroke-width="1.2" stroke-linejoin="round"/>
<rect x="1095" y="792.2" width="296" height="1" fill="#3f3f3f"/>
<path d="M1149.8 801.2l3.2 3.2 3.2-3.2" fill="none" stroke="#bbb" stroke-width="1.1"/>
<path d="M1164.5 795.7h13.0l5 7.5-5 7.5h-13.0z" fill="none" stroke="#d8d8d8" stroke-width="1.2" stroke-linejoin="round"/>
<rect x="1095" y="814.6" width="296" height="1" fill="#3f3f3f"/>
<path d="M1179.5 818.1h31.0l5 7.5-5 7.5h-31.0z" fill="none" stroke="#d8d8d8" stroke-width="1.2" stroke-linejoin="round"/>
<path d="M1106 820.5v12M1100 826.5h12" stroke="#eee" stroke-width="1.6"/><path d="M1113 830.5v2.5h-2.5z" fill="#ccc"/>
</svg>
<div class="a" style="left:1097px;top:838.5px;width:274px;height:9px;background:#5a5a5a;border-radius:4.5px"></div>
<div class="a" style="left:1391.5px;top:616px;width:8.5px;height:220px;background:#555;border-radius:4px"></div>
<div class="a" style="left:1256px;top:7px;width:1px;height:19px;background:#3a3a3a"></div>
<div class="a" style="left:1352.5px;top:7px;width:1px;height:19px;background:#3a3a3a"></div>
<div class="a vm" style="left:1269px;top:10px;color:#e0e0e0;font-size:12.5px">Standard</div>
<svg class="a" style="left:0;top:0" width="1400" height="40" viewBox="0 0 1400 40">
<path d="M1331.5 15.5h6.5l-3.25 3.5z" fill="#ccc"/>
<g transform="translate(1374 17)"><circle r="3.8" fill="none" stroke="#e8e8e8" stroke-width="2.6"/><g stroke="#e8e8e8" stroke-width="2.2"><path d="M0 -6.3v2.2M0 6.3v-2.2M-6.3 0h2.2M6.3 0h-2.2M-4.5 -4.5l1.5 1.5M4.5 4.5l-1.5 -1.5M-4.5 4.5l1.5 -1.5M4.5 -4.5l-1.5 1.5"/></g></g>
<rect x="1383.5" y="12" width="2" height="7" fill="#e8e8e8"/><rect x="1383.5" y="20.5" width="2" height="2" fill="#e8e8e8"/>
</svg>

</body></html>
